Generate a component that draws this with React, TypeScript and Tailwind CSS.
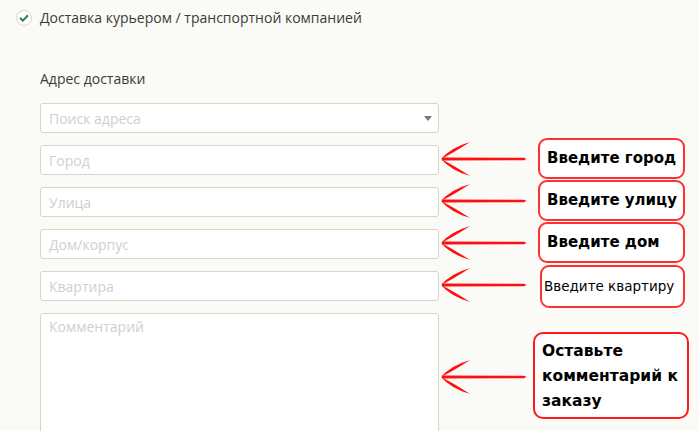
import React from 'react';

const fields = ['Город', 'Улица', 'Дом/корпус', 'Квартира'];

function Arrow({ top }: { top: number }) {
  return (
    <svg
      className="absolute"
      style={{ left: 440, top: top - 18 }}
      width="92"
      height="36"
      viewBox="0 0 92 36"
    >
      <path d="M1 18 Q11 6.5 30 1 Q14 11.5 1 18 Z" fill="#ff1010" />
      <path d="M1 18 Q11 29.5 30 35 Q14 24.5 1 18 Z" fill="#ff1010" />
      <path d="M2 16.6 L84 16.8 Q88 18 84 19.2 L2 19.4 Z" fill="#ff1010" />
    </svg>
  );
}

function Note({
  left,
  top,
  w,
  h,
  bold = true,
  children,
}: {
  left: number;
  top: number;
  w: number;
  h: number;
  bold?: boolean;
  children: React.ReactNode;
}) {
  return (
    <div
      className={`absolute flex items-center whitespace-nowrap rounded-[9px] border-2 border-[#ff3030] bg-white text-black ${
        bold ? 'pl-[7px] text-[15px] font-bold' : 'pl-[2px] text-[13.5px]'
      }`}
      style={{ left, top, width: w, height: h, fontFamily: '"DejaVu Sans", Verdana, sans-serif' }}
    >
      {children}
    </div>
  );
}

export default function App() {
  return (
    <div
      className="relative h-[431px] w-[699px] overflow-hidden bg-[#fafaf6] text-[#3a3a3a]"
      style={{ fontFamily: '"Open Sans", "Noto Sans", sans-serif' }}
    >
      <div className="flex items-center gap-2 pl-[16px] pt-[8px]">
        <span className="flex h-[16px] w-[16px] items-center justify-center rounded-full border border-[#d6d6d0] bg-white">
          <svg width="10" height="8" viewBox="0 0 10 8">
            <path d="M1 4 L3.8 6.6 L9 1.2" fill="none" stroke="#2f7a5c" strokeWidth="2" />
          </svg>
        </span>
        <span className="text-[14px] leading-5">Доставка курьером / транспортной компанией</span>
      </div>

      <div className="flex w-[439px] flex-col gap-3 pl-10 pt-[41px]">
        <div className="text-[14px] leading-5">Адрес доставки</div>
        <div className="mt-[2px] flex h-[30px] items-center justify-between rounded-[3px] border border-[#d6d6c8] bg-white pl-2 pr-[6px]">
          <span className="text-[14px] text-[#cfcfcf]">Поиск адреса</span>
          <span className="h-0 w-0 border-x-[4px] border-t-[5px] border-x-transparent border-t-[#7a7a7a]" />
        </div>
        {fields.map(f => (
          <div
            key={f}
            className="flex h-[30px] items-center rounded-[3px] border border-[#d6d6c8] bg-white pl-2 text-[14px] text-[#cfcfcf]"
          >
            {f}
          </div>
        ))}
        <div className="h-[140px] rounded-[3px] border border-[#d6d6c8] bg-white pl-2 pt-[2px] text-[14px] text-[#cfcfcf]">
          Комментарий
        </div>
      </div>

      {/* annotations */}
      <Arrow top={159} />
      <Arrow top={201} />
      <Arrow top={243} />
      <Arrow top={285} />
      <Arrow top={377} />

      <Note left={538} top={138} w={147} h={41}>Введите город</Note>
      <Note left={538} top={180} w={147} h={41}>Введите улицу</Note>
      <Note left={538} top={222} w={147} h={41}>Введите дом</Note>
      <Note left={540} top={265} w={145} h={43} bold={false}>Введите квартиру</Note>
      <div
        className="absolute flex items-center rounded-[10px] border-2 border-[#ff1a1a] bg-white pl-[7px] pr-2 pt-[2px] text-[15.5px] font-bold leading-[25px] text-black"
        style={{ left: 533, top: 332, width: 156, height: 87, fontFamily: '"DejaVu Sans", Verdana, sans-serif' }}
      >
        Оставьте комментарий к заказу
      </div>
    </div>
  );
}
